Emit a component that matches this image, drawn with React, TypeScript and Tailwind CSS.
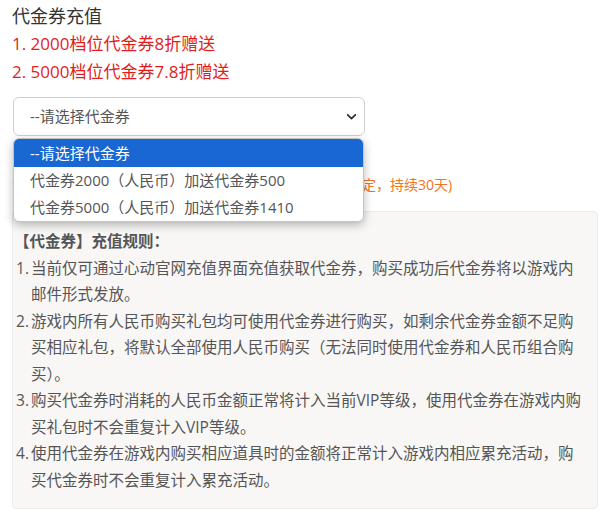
import { useState } from "react";

const options = [
  "--请选择代金券",
  "代金券2000（人民币）加送代金券500",
  "代金券5000（人民币）加送代金券1410",
];

const rules: string[][] = [
  ["当前仅可通过心动官网充值界面充值获取代金券，购买成功后代金券将以游戏内", "邮件形式发放。"],
  [
    "游戏内所有人民币购买礼包均可使用代金券进行购买，如剩余代金券金额不足购",
    "买相应礼包，将默认全部使用人民币购买（无法同时使用代金券和人民币组合购",
    "买）。",
  ],
  ["购买代金券时消耗的人民币金额正常将计入当前VIP等级，使用代金券在游戏内购", "买礼包时不会重复计入VIP等级。"],
  ["使用代金券在游戏内购买相应道具时的金额将正常计入游戏内相应累充活动，购", "买代金券时不会重复计入累充活动。"],
];

function Chevron() {
  return (
    <svg className="w-[11px] h-[11px] text-[#333]" viewBox="0 0 16 16" fill="none" stroke="currentColor" strokeWidth="2.6" strokeLinecap="round" strokeLinejoin="round">
      <path d="M2.5 5.5L8 11l5.5-5.5" />
    </svg>
  );
}

export default function App() {
  const [selected] = useState(0);
  return (
    <div className="min-h-[517px] bg-white px-3 pt-[2px] font-['Open_Sans','Noto_Sans_CJK_SC',sans-serif]">
      {/* heading */}
      <div className="text-[18px] leading-[28px] text-[#333]">代金券充值</div>
      <div className="text-[17px] leading-[28px] text-[#e01e1e]">1. 2000档位代金券8折赠送</div>
      <div className="text-[17px] leading-[28px] text-[#e01e1e]">2. 5000档位代金券7.8折赠送</div>

      {/* select + open list */}
      <div className="relative mt-[11px] w-[353px] pl-[1px]">
        <div className="flex h-[39px] items-center justify-between rounded-[6px] border border-[#cfcfcf] bg-white pl-4 pr-[7px] text-[15px] text-[#555]">
          <span>{options[selected]}</span>
          <Chevron />
        </div>
        <div className="absolute left-[1px] top-[41px] z-10 w-[351px] overflow-hidden rounded-[6px] border border-[#c4c4c4] bg-white shadow-[0_3px_10px_rgba(0,0,0,0.28)]">
          {options.map((o, i) => (
            <div
              key={i}
              className={
                i === selected
                  ? "h-[28px] bg-[#1967d2] pl-4 text-[15px] leading-[28px] text-white"
                  : "h-[27px] pl-4 text-[15px] leading-[27px] text-[#555]"
              }
            >
              {o}
            </div>
          ))}
        </div>
      </div>

      {/* note line (mostly hidden under list) */}
      <div className="mt-[35px] text-[14px] leading-[28px] whitespace-nowrap">
        <span className="text-[#777]">注：</span>
        <span className="text-[#f07422]">代金券购买成功后将通过游戏内邮件发放（有效期固定，持续30天)</span>
      </div>

      {/* rules */}
      <div className="mt-[12px] w-[586px] rounded-[4px] border border-[#ececec] bg-[#f8f7f6] pl-[1px] pt-[16px] pb-[15px] text-[15.5px] leading-[26.5px] text-[#555]">
        <div className="font-bold">【代金券】充值规则：</div>
        {rules.map((lines, i) => (
          <div key={i} className="flex">
            <span className="w-[17px] shrink-0 pl-[2px]">{i + 1}.</span>
            <div className="whitespace-nowrap">
              {lines.map((l, j) => (
                <div key={j}>{l}</div>
              ))}
            </div>
          </div>
        ))}
      </div>
    </div>
  );
}
